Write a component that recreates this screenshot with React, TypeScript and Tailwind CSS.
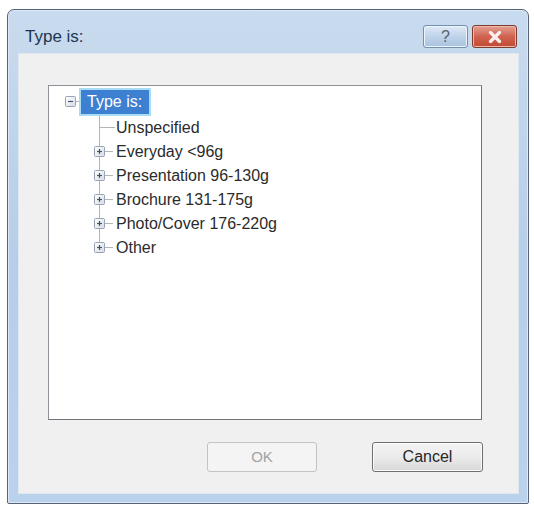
const items = [
  { label: 'Unspecified', expandable: false },
  { label: 'Everyday <96g', expandable: true },
  { label: 'Presentation 96-130g', expandable: true },
  { label: 'Brochure 131-175g', expandable: true },
  { label: 'Photo/Cover 176-220g', expandable: true },
  { label: 'Other', expandable: true },
]

function Expander({ open, x }: { open: boolean; x: number }) {
  return (
    <g>
      <rect x={x + 0.5} y={6.5} width={10} height={10} rx={1} fill="url(#exp)" stroke="#98a3b4" />
      <line x1={x + 3} y1={11.5} x2={x + 8} y2={11.5} stroke="#3f5573" strokeWidth={1.2} />
      {!open && <line x1={x + 5.5} y1={9} x2={x + 5.5} y2={14} stroke="#3f5573" strokeWidth={1.2} />}
    </g>
  )
}

function Gradients() {
  return (
    <svg width="0" height="0" className="absolute">
      <defs>
        <linearGradient id="exp" x1="0" y1="0" x2="1" y2="1">
          <stop offset="0" stopColor="#ffffff" />
          <stop offset="1" stopColor="#d6dbe3" />
        </linearGradient>
      </defs>
    </svg>
  )
}

function TreeRow({ label, expandable, last }: { label: string; expandable: boolean; last: boolean }) {
  return (
    <div className="flex h-[24px] items-center">
      <svg width="66" height="24" className="shrink-0">
        <line x1={50.5} y1={0} x2={50.5} y2={last ? 12 : 24} stroke="#b4b4b4" />
        {expandable ? (
          <>
            <line x1={55} y1={11.5} x2={64} y2={11.5} stroke="#b4b4b4" />
            <Expander open={false} x={45} />
          </>
        ) : (
          <line x1={51} y1={11.5} x2={66} y2={11.5} stroke="#b4b4b4" />
        )}
      </svg>
      <span className="pl-[1px] text-[16px] leading-none text-[#2b2b2b]">{label}</span>
    </div>
  )
}

export default function App() {
  return (
    <div className="h-[506px] w-[534px] overflow-hidden bg-white pl-[7px] pt-[9px] font-['Liberation_Sans',Arial,sans-serif]">
      <Gradients />
      <div className="flex h-[495px] w-[522px] flex-col rounded-t-[7px] rounded-b-[2px] border border-[#556577] bg-gradient-to-b from-[#c9dbee] via-[#b7cee8] to-[#bad2ec] shadow-[inset_0_0_0_1px_#dce8f5]">
        <div className="flex h-[43px] shrink-0 items-start">
          <div className="pl-[17px] pt-[18px] text-[17px] leading-none text-[#1c3550]">Type is:</div>
          <div className="ml-auto mr-[11px] mt-[15px] flex gap-[4px]">
            <div className="flex h-[23px] w-[45px] items-center justify-center rounded-[3px] border border-[#7390b0] bg-gradient-to-b from-[#dfeaf6] via-[#bfd3ea] to-[#a9c3e0] shadow-[inset_0_0_0_1px_#eef4fb]">
              <span className="text-[16px] leading-none text-[#56616d]">?</span>
            </div>
            <div className="flex h-[23px] w-[45px] items-center justify-center rounded-[3px] border border-[#803a2e] bg-gradient-to-b from-[#e3a093] via-[#d0634f] to-[#c24a33] shadow-[inset_0_0_0_1px_#efb8ad]">
              <svg width="14" height="12" viewBox="0 0 14 12">
                <path d="M2.5 1.5 L11.5 10.5 M11.5 1.5 L2.5 10.5" stroke="#fbeeee" strokeWidth="3.2" strokeLinecap="round" />
              </svg>
            </div>
          </div>
        </div>
        <div className="mb-[9px] ml-[10px] mr-[9px] flex flex-1 flex-col border border-[#dfe8f2] bg-[#f0f0f0]">
          <div className="ml-[29px] mt-[31px] h-[335px] w-[434px] border border-[#8e9298] border-b-[#6f7378] border-r-[#6f7378] bg-white pt-[2px]">
            <div className="flex h-[28px] items-center">
              <svg width="30" height="24" className="shrink-0">
                <Expander open={true} x={16} />
                <line x1={27} y1={11.5} x2={30} y2={11.5} stroke="#b4b4b4" />
              </svg>
              <div className="flex h-[28px] w-[72px] items-center border-2 border-[#a9dcf2] bg-[#3d7fd0] pl-[6px]">
                <span className="text-[16px] leading-none text-white">Type is:</span>
              </div>
            </div>
            {items.map((it, i) => (
              <TreeRow key={it.label} label={it.label} expandable={it.expandable} last={i === items.length - 1} />
            ))}
          </div>
          <div className="mt-[22px] flex justify-end gap-[55px] pr-[35px]">
            <div className="flex h-[30px] w-[110px] items-center justify-center rounded-[3px] border border-[#c3c3c3] bg-[#f4f4f4] text-[15px] text-[#a3a3a3]">
              OK
            </div>
            <div className="flex h-[30px] w-[111px] items-center justify-center rounded-[3px] border border-[#6f6f6f] bg-gradient-to-b from-[#f4f4f4] via-[#ebebeb] to-[#d8d8d8] text-[16px] text-[#262626] shadow-[inset_0_0_0_1px_#fbfbfb]">
              Cancel
            </div>
          </div>
        </div>
      </div>
    </div>
  )
}
